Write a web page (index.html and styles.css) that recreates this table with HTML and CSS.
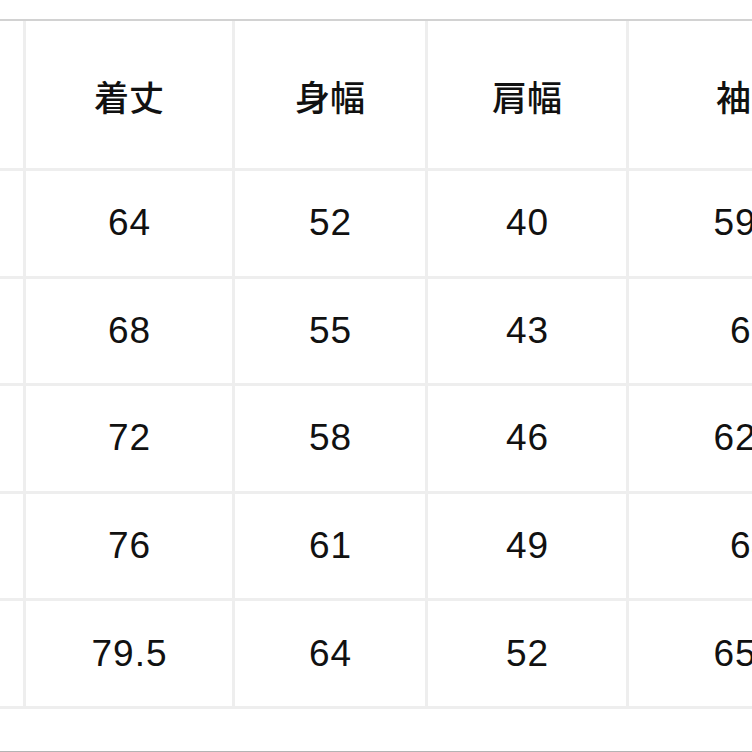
FILE: index.html
```html
<!DOCTYPE html>
<html lang="ja">
<head>
<meta charset="utf-8">
<link rel="stylesheet" href="styles.css">
</head>
<body>
<div class="page">
  <div class="sheet">
    <div class="grid">
      <div class="cell head"></div>
      <div class="cell head">着丈</div>
      <div class="cell head">身幅</div>
      <div class="cell head">肩幅</div>
      <div class="cell head">袖丈</div>

      <div class="cell"></div>
      <div class="cell">64</div>
      <div class="cell">52</div>
      <div class="cell">40</div>
      <div class="cell">59.5</div>

      <div class="cell"></div>
      <div class="cell">68</div>
      <div class="cell">55</div>
      <div class="cell">43</div>
      <div class="cell">61</div>

      <div class="cell"></div>
      <div class="cell">72</div>
      <div class="cell">58</div>
      <div class="cell">46</div>
      <div class="cell">62.5</div>

      <div class="cell"></div>
      <div class="cell">76</div>
      <div class="cell">61</div>
      <div class="cell">49</div>
      <div class="cell">64</div>

      <div class="cell"></div>
      <div class="cell">79.5</div>
      <div class="cell">64</div>
      <div class="cell">52</div>
      <div class="cell">65.5</div>
    </div>
    <div class="footer"></div>
  </div>
</div>
</body>
</html>
```
FILE: styles.css
```css
html, body {
  margin: 0;
  padding: 0;
  background: #ffffff;
}
.page {
  width: 752px;
  height: 752px;
  overflow: hidden;
  padding-top: 19px;
  box-sizing: border-box;
}
.sheet {
  width: 900px;
  border-top: 2px solid #d2d2d2;
}
.grid {
  display: grid;
  grid-template-columns: 23px 206px 190px 198px 244px;
  grid-template-rows: 147px repeat(5, 104.6px);
  column-gap: 3px;
  row-gap: 3px;
  padding-bottom: 3px;
  background: #eeeeee;
}
.cell {
  background: #ffffff;
  display: flex;
  align-items: center;
  justify-content: center;
  font-family: "Liberation Sans", "Noto Sans CJK JP", sans-serif;
  font-size: 37px;
  letter-spacing: 1px;
  padding-left: 1px;
  color: #111111;
}
.head {
  font-size: 35px;
  font-weight: 500;
  letter-spacing: 0;
  padding-left: 0;
  padding-top: 1px;
}
.footer {
  height: 42px;
  border-bottom: 2px solid #b4b4b4;
  background: #ffffff;
}
```
